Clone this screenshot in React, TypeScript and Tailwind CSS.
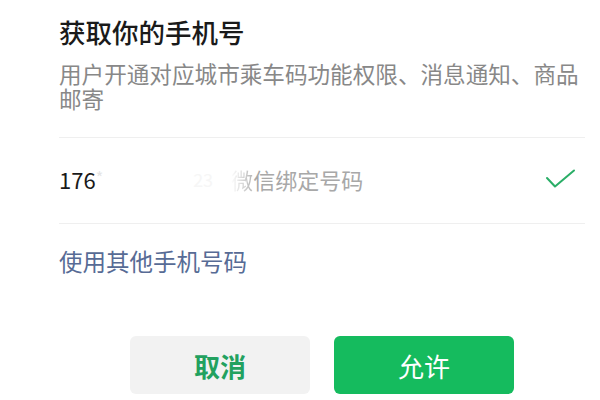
export default function App() {
  return (
    <div
      className="w-[600px] h-[400px] bg-white overflow-hidden"
      style={{ fontFamily: '"Noto Sans CJK SC", "Noto Sans", sans-serif' }}
    >
      <div className="pl-[59px] pr-[15px]">
        {/* Header */}
        <h1 className="pt-[14px] text-[26.5px] leading-[36px] font-medium text-[#1a1a1a]">
          获取你的手机号
        </h1>
        <p className="mt-[11px] text-[22.6px] leading-[25px] text-[#888888]">
          用户开通对应城市乘车码功能权限、消息通知、商品邮寄
        </p>

        {/* Phone row */}
        <div className="mt-[26px] border-t border-[#efefef]">
          <div className="h-[85px] pb-[4px] flex items-center justify-between">
            <div className="flex items-center text-[22px] leading-[30px]">
              <span className="text-[#1a1a1a]">176</span>
              <span className="text-[#e4e4e4] text-[16px] self-start -mt-[2px]">*</span>
              <span className="ml-[90px] text-[#f6f6f6] text-[18px]">23</span>
              <span className="ml-[18px] bg-gradient-to-r from-white to-[#b5b5b5] bg-clip-text text-transparent">
                微
              </span>
              <span className="text-[#a8a8a8]">信绑定号码</span>
            </div>
            <svg
              width="32"
              height="22"
              viewBox="0 0 32 22"
              className="mr-[8px]"
              fill="none"
            >
              <path
                d="M2 10 L10 18.5 L29 2.5"
                stroke="#2aae67"
                strokeWidth="2"
                strokeLinecap="round"
                strokeLinejoin="round"
              />
            </svg>
          </div>
        </div>

        {/* Other phone link */}
        <div className="border-t border-[#efefef] h-[79px] pb-[5px] flex items-center">
          <span className="text-[23.5px] leading-[30px] text-[#576b95]">使用其他手机号码</span>
        </div>

        {/* Buttons */}
        <div className="mt-[34px] flex justify-center gap-[24px]">
          <button className="w-[180px] h-[58px] rounded-[6px] bg-[#f2f2f2] text-[#22a15f] text-[26px] font-bold">
            取消
          </button>
          <button className="w-[180px] h-[58px] rounded-[6px] bg-[#15bb5e] text-white text-[26px] font-normal">
            允许
          </button>
        </div>
      </div>
    </div>
  );
}
